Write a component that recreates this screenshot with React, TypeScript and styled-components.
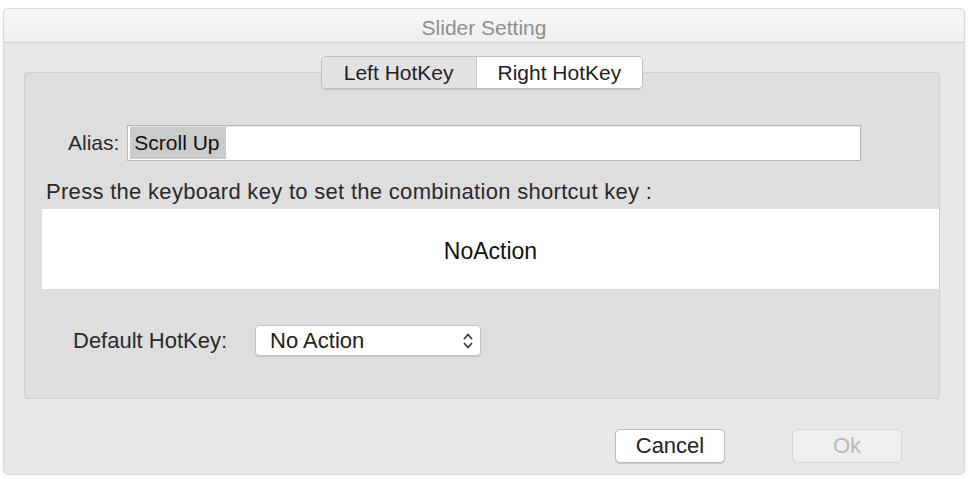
import styled, { createGlobalStyle } from "styled-components";

const GlobalStyle = createGlobalStyle`
    html, body {
        margin: 0;
        padding: 0;
        background: #ffffff;
    }
    body {
        font-family: "Liberation Sans", Arial, sans-serif;
        color: #222;
    }
    *, *::before, *::after {
        box-sizing: border-box;
    }
`;

export default function App(): JSX.Element {
    return (
        <Page>
            <GlobalStyle />
            <Window>
                <TitleBar>Slider Setting</TitleBar>
                <Body>
                    <Tabs>
                        <Tab pad={22}>Left HotKey</Tab>
                        <Tab pad={21} active>Right HotKey</Tab>
                    </Tabs>
                    <Group>
                        <AliasRow>
                            <Label size={21}>Alias:</Label>
                            <Field>
                                <Selected>Scroll Up</Selected>
                            </Field>
                        </AliasRow>
                        <Hint>Press the keyboard key to set the combination shortcut key :</Hint>
                        <KeyBox>NoAction</KeyBox>
                        <DefaultRow>
                            <Label size={22}>Default HotKey:</Label>
                            <Select>
                                <span>No Action</span>
                                <svg width="10" height="18" viewBox="0 0 10 18">
                                    <path d="M1.5 6.5 L5 2.5 L8.5 6.5 M1.5 11.5 L5 15.5 L8.5 11.5" fill="none" stroke="#3a3a3a" strokeWidth="1.8" strokeLinecap="round" strokeLinejoin="round" />
                                </svg>
                            </Select>
                        </DefaultRow>
                    </Group>
                    <Buttons>
                        <Button>Cancel</Button>
                        <Button disabled>Ok</Button>
                    </Buttons>
                </Body>
            </Window>
        </Page>
    );
};

const Page = styled.div`
    padding: 8px 0 0 3px;
`;

const Window = styled.div`
    width: 962px;
    height: 467px;
    background: #e8e8e8;
    border: 1px solid #d8d8d8;
    border-radius: 5px;
    box-shadow: 0 1px 3px rgba(0, 0, 0, 0.08);
    overflow: hidden;
    display: flex;
    flex-direction: column;
`;

const TitleBar = styled.div`
    height: 34px;
    padding-top: 4px;
    background: linear-gradient(#f7f7f7, #efefef);
    border-bottom: 1px solid #d2d2d2;
    display: flex;
    align-items: center;
    justify-content: center;
    font-size: 21px;
    color: #8e8e8e;
`;

const Body = styled.div`
    padding: 0 24px 0 20px;
    display: flex;
    flex-direction: column;
`;

const Tabs = styled.div`
    align-self: center;
    margin-top: 13px;
    margin-bottom: -17px;
    height: 33px;
    display: flex;
    border: 1px solid #bdbdbd;
    border-radius: 5px;
    overflow: hidden;
    position: relative;
    z-index: 1;
    box-shadow: 0 1px 1px rgba(0, 0, 0, 0.1);
`;

const Tab = styled.div<{ active?: boolean; pad: number }>`
    display: flex;
    align-items: center;
    padding: 0 ${p => p.pad}px;
    font-size: 21px;
    color: #222;
    background: ${p => (p.active ? "#ffffff" : "#e2e2e2")};
    border-left: ${p => (p.active ? "1px solid #c8c8c8" : "none")};
`;

const Group = styled.div`
    background: #dedede;
    border: 1px solid #d0d0d0;
    border-radius: 3px;
    padding: 52px 0 42px 0;
`;

const Label = styled.span<{ size: number }>`
    font-size: ${p => p.size}px;
    color: #2a2a2a;
`;

const AliasRow = styled.div`
    display: flex;
    align-items: center;
    padding-left: 43px;
    gap: 8px;
`;

const Field = styled.div`
    width: 734px;
    height: 36px;
    background: #ffffff;
    border: 1px solid #b5b5b5;
    box-shadow: inset 0 1px 0 #e6e6e6;
    display: flex;
    align-items: center;
    padding-left: 2px;
`;

const Selected = styled.span`
    background: #cbcbcb;
    font-size: 21px;
    color: #111;
    padding: 4px 6px 4px 4px;
`;

const Hint = styled.div`
    margin: 19px 0 5px 21px;
    line-height: 24px;
    font-size: 22px;
    letter-spacing: 0.3px;
    color: #2a2a2a;
`;

const KeyBox = styled.div`
    margin-left: 17px;
    height: 80px;
    padding-top: 4px;
    background: #ffffff;
    display: flex;
    align-items: center;
    justify-content: center;
    font-size: 23px;
    color: #111;
`;

const DefaultRow = styled.div`
    margin-top: 36px;
    display: flex;
    align-items: center;
    padding-left: 48px;
    gap: 28px;
`;

const Select = styled.div`
    width: 226px;
    height: 31px;
    background: #ffffff;
    border: 1px solid #c2c2c2;
    border-radius: 4px;
    box-shadow: 0 1px 1px rgba(0, 0, 0, 0.12);
    display: flex;
    align-items: center;
    justify-content: space-between;
    padding: 0 7px 0 14px;
    font-size: 22px;
    color: #222;
`;

const Buttons = styled.div`
    display: flex;
    justify-content: flex-end;
    gap: 67px;
    margin-top: 30px;
    padding-right: 38px;
`;

const Button = styled.button`
    width: 110px;
    height: 34px;
    font-family: "Liberation Sans", Arial, sans-serif;
    font-size: 22px;
    color: ${p => (p.disabled ? "#b9b9b9" : "#222")};
    background: ${p => (p.disabled ? "#efefef" : "#ffffff")};
    border: 1px solid ${p => (p.disabled ? "#d6d6d6" : "#bdbdbd")};
    border-radius: 5px;
    box-shadow: ${p => (p.disabled ? "none" : "0 1px 1px rgba(0, 0, 0, 0.15)")};
    padding: 0;
`;
